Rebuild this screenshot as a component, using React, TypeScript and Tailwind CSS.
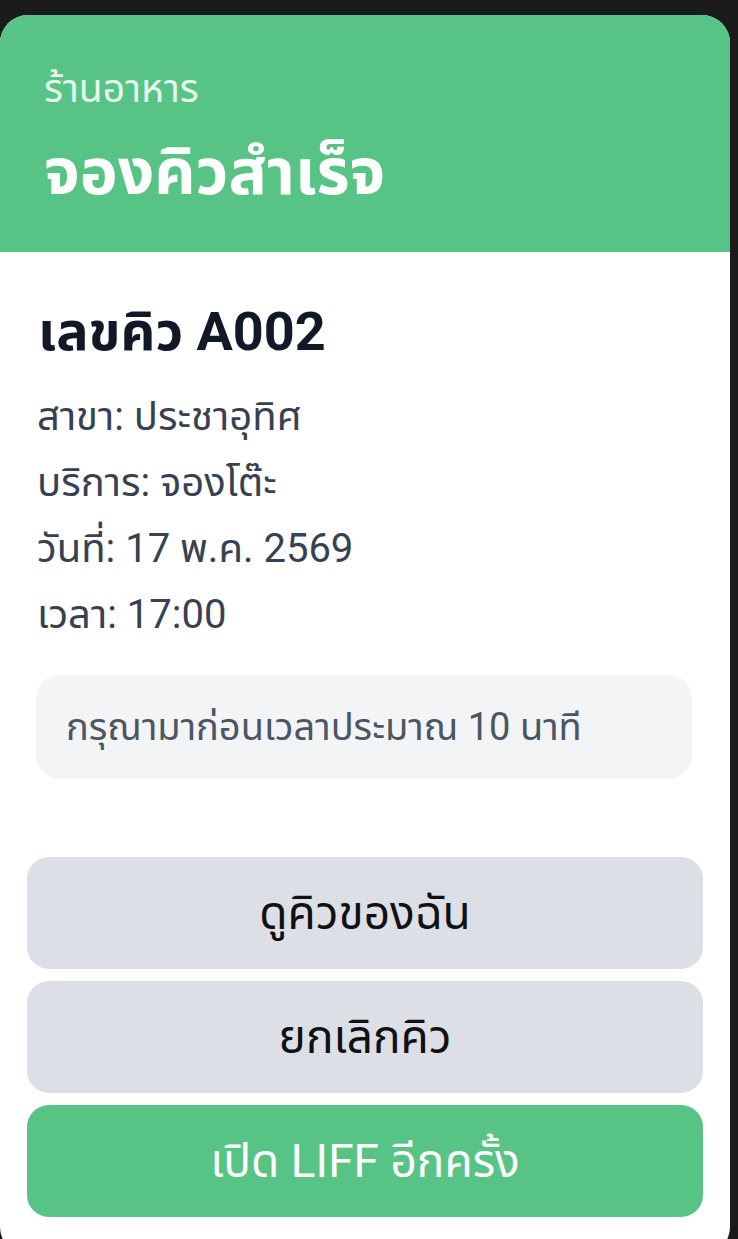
import React from "react";

export default function App() {
  const font = { fontFamily: 'Roboto, "Noto Sans", "Noto Sans Thai", sans-serif' };
  return (
    <div className="min-h-[1239px] w-[738px] bg-[#1b1b1b] pt-[15px] overflow-hidden" style={font}>
      <div className="w-[730px] h-[1240px] bg-white rounded-[28px] overflow-hidden flex flex-col">
        <div className="bg-[#57c485] h-[237px] shrink-0 pl-[44px] pt-[54px] flex flex-col overflow-hidden">
          <div className="text-[39px] leading-[40px] text-white/85">ร้านอาหาร</div>
          <div className="mt-[29px] text-[64px] leading-[70px] font-bold text-white">จองคิวสำเร็จ</div>
        </div>
        <div className="px-[36px] pt-[52px] flex flex-col">
          <div className="pl-[2px] text-[54px] leading-[56px] font-bold text-[#111827]">เลขคิว A002</div>
          <div className="pl-[1px] mt-[24px] flex flex-col text-[40px] leading-[66px] text-[#374151]">
            <div>สาขา: ประชาอุทิศ</div>
            <div>บริการ: จองโต๊ะ</div>
            <div>วันที่: 17 พ.ค. 2569</div>
            <div>เวลา: 17:00</div>
          </div>
          <div className="mt-[27px] w-[656px] h-[104px] rounded-[24px] bg-[#f3f4f6] flex items-center pl-[30px] text-[38px] text-[#4b5563]">
            กรุณามาก่อนเวลาประมาณ 10 นาที
          </div>
        </div>
        <div className="mt-[78px] px-[27px] flex flex-col gap-[12px]">
          <div className="h-[112px] rounded-[22px] bg-[#dcdfe6] flex items-center justify-center text-[46px] text-[#111111]">ดูคิวของฉัน</div>
          <div className="h-[112px] rounded-[22px] bg-[#dcdfe6] flex items-center justify-center text-[46px] text-[#111111]">ยกเลิกคิว</div>
          <div className="h-[112px] rounded-[22px] bg-[#57c485] flex items-center justify-center text-[46px] text-white">เปิด LIFF อีกครั้ง</div>
        </div>
      </div>
    </div>
  );
}
